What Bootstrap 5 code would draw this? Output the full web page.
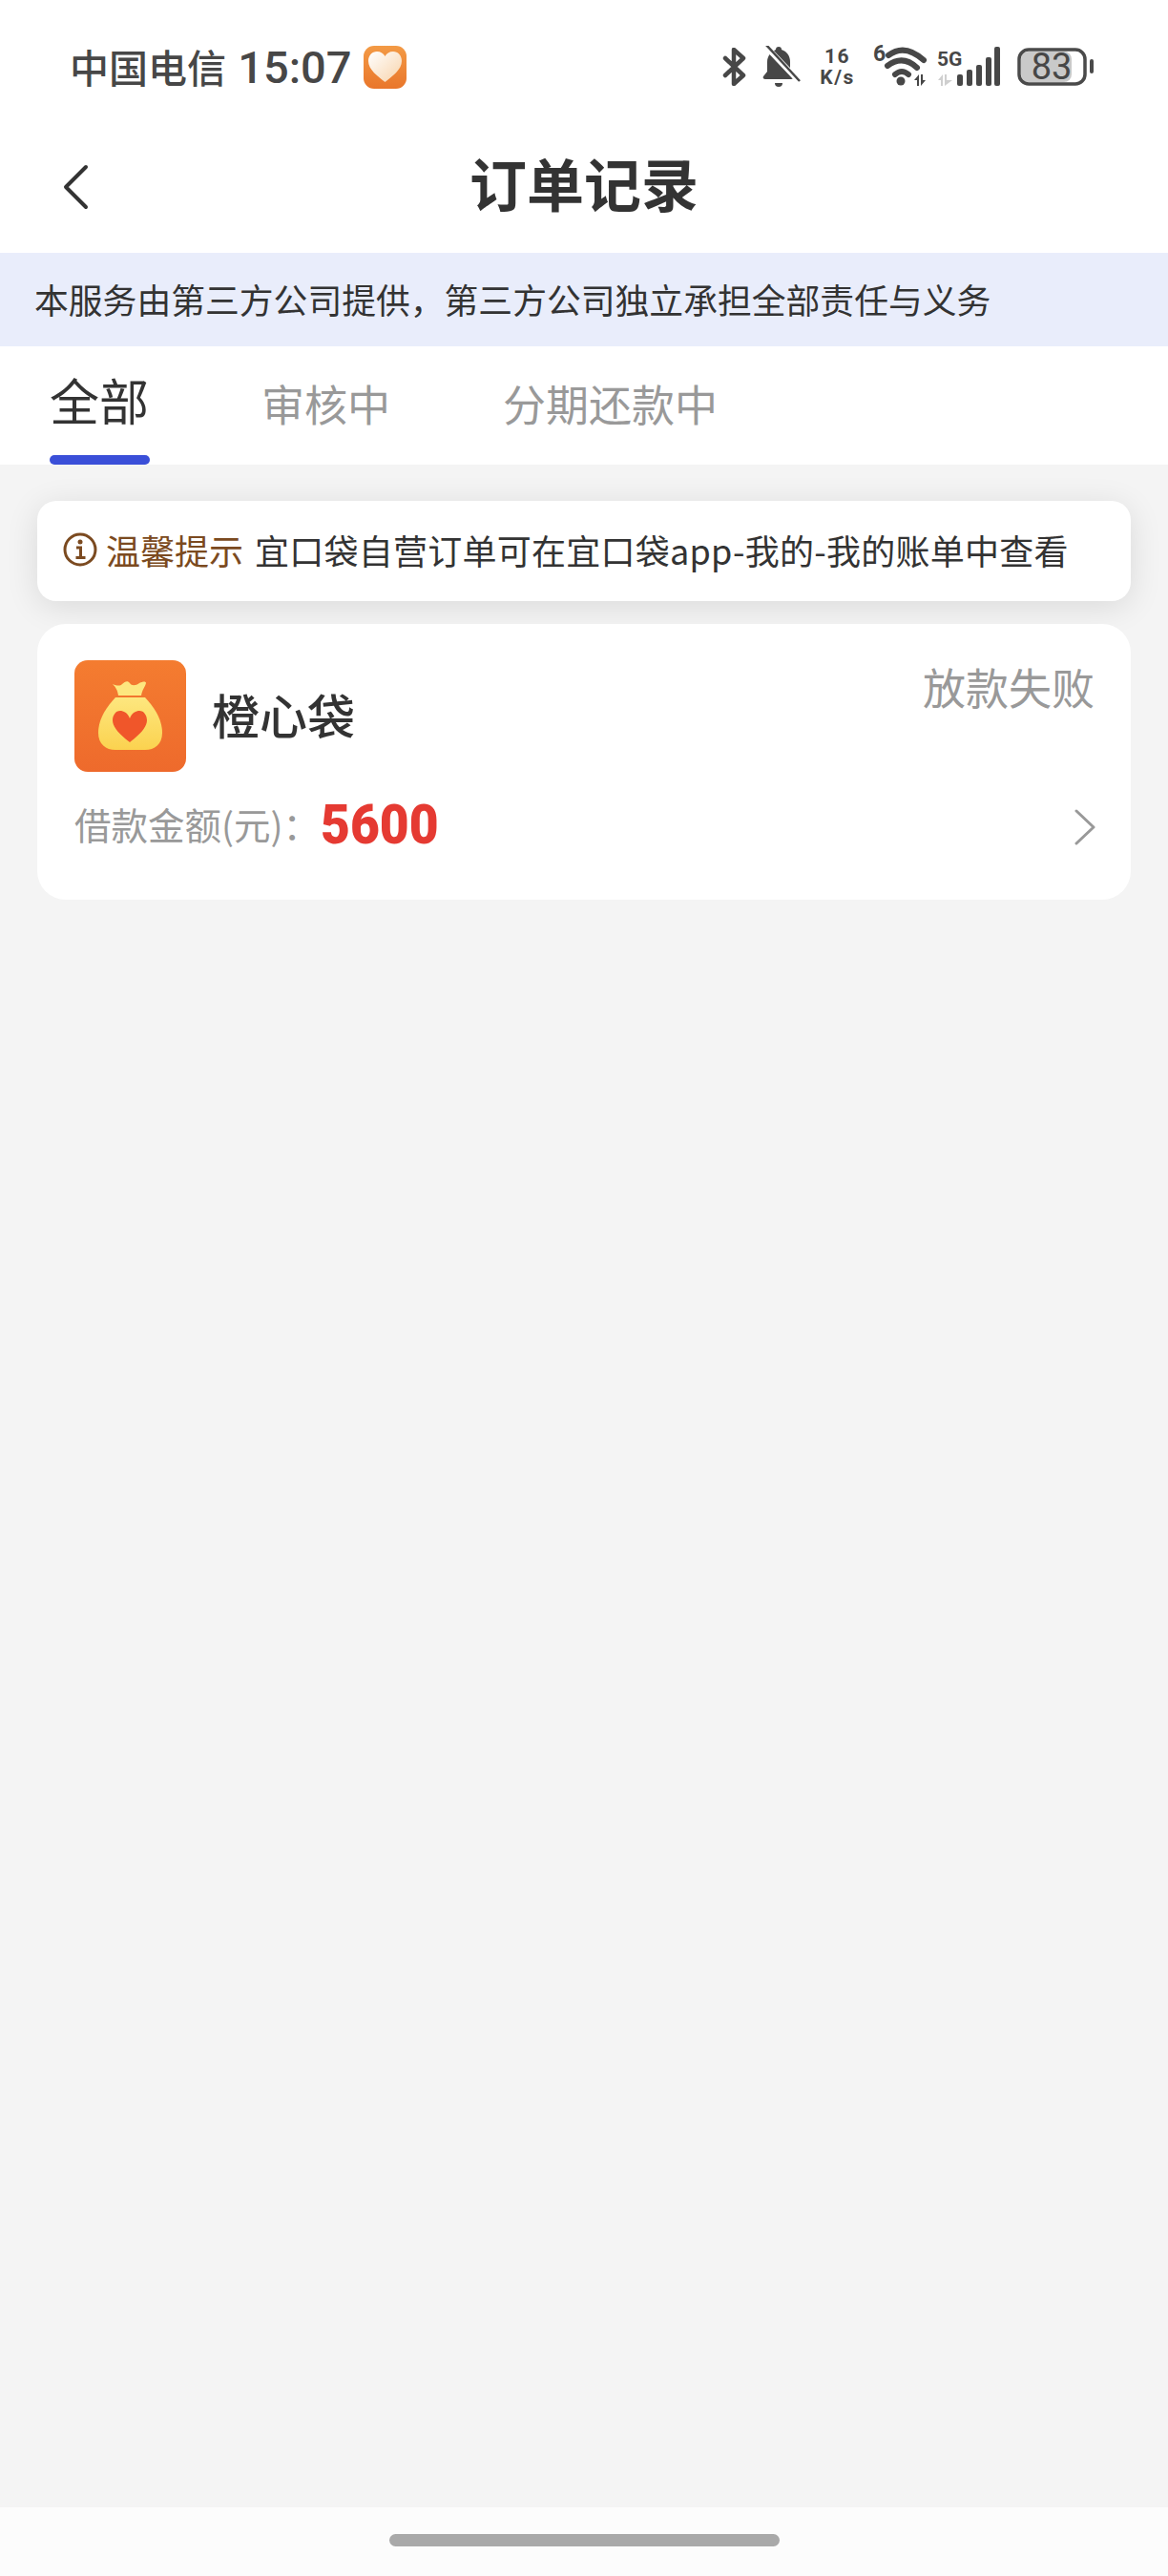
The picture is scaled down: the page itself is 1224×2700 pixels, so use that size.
<!DOCTYPE html>
<html lang="zh-CN">
<head>
<meta charset="UTF-8">
<meta name="viewport" content="width=device-width, initial-scale=1.0">
<title>订单记录</title>
<link href="https://cdn.jsdelivr.net/npm/bootstrap@5.3.3/dist/css/bootstrap.min.css" rel="stylesheet">
<style>
  body { font-family: "Noto Sans CJK SC", "Noto Sans", sans-serif; background: #f4f4f4; color: #333; width: 1224px; min-height: 2700px; }
  .status-row { height: 128px; padding: 12px 78px 0 73px; color: #474747; }
  .carrier { font-family: "Roboto", "Noto Sans CJK SC", sans-serif; font-size: 41px; font-weight: 500; line-height: 1; }
  .clock { font-size: 47px; margin-left: 2px; }
  .app-dot { margin-left: 13px; }
  .net-speed { width: 41px; font-family: "Roboto", sans-serif; font-weight: 700; text-align: center; }
  .net-speed span { display: block; font-size: 21px; line-height: 22px; letter-spacing: 1.5px; white-space: nowrap; }
  .top-nav { height: 137px; }
  .back-btn { left: 65px; top: 44px; }
  .page-title { font-size: 60px; font-weight: 700; line-height: 1; margin-top: -12px; }
  .service-note { height: 98px; background: #e9edfb; padding-left: 36px; font-size: 35.8px; color: #333; }
  .tab-row { height: 124px; padding-left: 52px; gap: 118px; }
  .tab-item { font-size: 45px; line-height: 1; color: #999; padding-top: 37px; }
  .tab-on { font-size: 52px; color: #333; padding-top: 30px; }
  .tab-on::after { content: ""; position: absolute; left: 0; right: -1px; bottom: 0; height: 10px; border-radius: 5px; background: #3a4fd8; }
  .tips-box { height: 105px; margin: 38px 39px 24px; padding: 0 0 4px 27px; border-radius: 20px; box-shadow: 0 6px 34px rgba(0, 0, 0, .11); font-size: 36px; color: #333; }
  .tips-label { color: #7b4a20; margin-left: 9px; margin-right: 12px; }
  .tips-text { letter-spacing: .25px; }
  .order-box { height: 289px; margin: 0 39px; padding: 38px 39px 0; border-radius: 30px; }
  .order-name { font-size: 50px; font-weight: 500; margin-left: 27px; margin-top: -5px; line-height: 1; color: #333; }
  .order-state { font-size: 45px; line-height: 1; color: #999; margin-top: 5px; margin-right: -1px; }
  .amount-row { margin-top: 31px; }
  .amount-label { font-size: 38.5px; color: #999; line-height: 1; margin-top: -6px; }
  .amount-value { font-family: "Roboto", sans-serif; font-size: 58px; font-weight: 900; line-height: 1; color: #e53a32; margin-left: 1px; margin-top: -5px; transform: scaleX(.92); transform-origin: left center; }
  .more-arrow { margin-right: -2px; }
  .home-row { height: 72px; background: #fcfcfc; }
  .home-bar { width: 409px; height: 13px; border-radius: 7px; background: #a9a9a9; margin-top: -3px; }
  .page-fill { flex: 1 1 auto; }
</style>
</head>
<body class="d-flex flex-column">
  <div class="bg-white">
    <div class="status-row d-flex align-items-center">
      <span class="carrier">中国电信 <span class="clock">15:07</span></span>
      <svg class="app-dot" width="45" height="45" viewBox="0 0 45 45">
        <defs>
          <linearGradient id="dotbg" x1="0" y1="0" x2="0" y2="1"><stop offset="0" stop-color="#f39a45"/><stop offset="1" stop-color="#e9762b"/></linearGradient>
          <linearGradient id="dotheart" x1="0" y1="0" x2="1" y2="1"><stop offset="0" stop-color="#fff"/><stop offset="1" stop-color="#f8d3aa"/></linearGradient>
        </defs>
        <rect width="45" height="45" rx="11" fill="url(#dotbg)"/>
        <path d="M22.5 38C15 32 5 25 5 16 5 10 9 6 14 6c4 0 7 2 8.500 5C24 8 27 6 31 6c5 0 9 4 9 10 0 9-10 16-17.500 22z" fill="url(#dotheart)"/>
      </svg>
      <div class="d-flex align-items-center gap-3 ms-auto">
        <svg width="26" height="40" viewBox="0 0 26 40" fill="none" stroke="#474747" stroke-width="4.500" stroke-linejoin="round" stroke-linecap="round">
          <path d="M3 11 22 29 12 38V2l10 9L3 29"/>
        </svg>
        <svg width="42" height="45" viewBox="0 0 42 45">
          <path d="M17 1a3 3 0 0 1 3 3c6 2 9 7 9 13v10l3 5c1 1 0 3-2 3H3c-2 0-3-2-2-3l4-5V17c0-6 4-11 9-13a3 3 0 0 1 3-3z" fill="#474747"/>
          <path d="M13 39h8a4 4 0 0 1-8 0z" fill="#474747"/>
          <path d="M3 0 39 38" stroke="#fff" stroke-width="6"/>
          <path d="M1 1 37 40" stroke="#474747" stroke-width="2.500" transform="translate(2 -3)"/>
        </svg>
        <div class="net-speed"><span>16</span><span>K/s</span></div>
        <svg width="136" height="58" viewBox="0 -6 136 58" fill="#474747">
          <text x="1" y="17" font-family="Roboto, sans-serif" font-size="23" font-weight="700">6</text>
          <g fill="none" stroke="#474747" stroke-width="6" stroke-linecap="round">
            <path d="M17 11Q34-2 54 16"/>
            <path d="M16 22Q32 10 47 24"/>
            <path d="M24 31Q31 25 38 31"/>
          </g>
          <circle cx="30" cy="38" r="4.500"/>
          <path d="M44 37l5-6v12h-2v-6zM51 31h2v6h3l-5 6z"/>
          <text x="68" y="22" font-family="Roboto, sans-serif" font-size="21" font-weight="700">5G</text>
          <path d="M69 37l5-6v12h-2v-6zM76 31h2v6h6l-8 6z" fill="#cfcfcf"/>
          <rect x="89" y="31" width="6" height="12" rx="2"/>
          <rect x="99" y="26" width="6" height="17" rx="2"/>
          <rect x="109" y="21" width="6" height="22" rx="2"/>
          <rect x="119" y="13" width="6" height="30" rx="2"/>
          <rect x="128" y="2" width="6" height="41" rx="2"/>
        </svg>
        <svg width="80" height="50" viewBox="0 -5 80 50">
          <rect x="4" y="4" width="53" height="32" rx="8" fill="#c9c9c9"/>
          <rect x="2" y="2" width="69" height="36" rx="10" fill="none" stroke="#4a4a4a" stroke-width="3.500"/>
          <rect x="76" y="12" width="4" height="15" rx="2" fill="#4a4a4a"/>
          <text x="36" y="33" text-anchor="middle" font-family="Roboto, sans-serif" font-size="38" fill="#474747">83</text>
        </svg>
      </div>
    </div>
    <div class="top-nav position-relative d-flex align-items-center justify-content-center">
      <svg class="back-btn position-absolute" width="30" height="48" viewBox="0 0 30 48" fill="none" stroke="#333" stroke-width="4" stroke-linecap="round" stroke-linejoin="round">
        <path d="M25 3 4 24l21 21"/>
      </svg>
      <h1 class="page-title mb-0">订单记录</h1>
    </div>
  </div>

  <div class="service-note d-flex align-items-center">本服务由第三方公司提供，第三方公司独立承担全部责任与义务</div>

  <div class="tab-row bg-white d-flex">
    <div class="tab-item tab-on position-relative">全部</div>
    <div class="tab-item">审核中</div>
    <div class="tab-item">分期还款中</div>
  </div>

  <div class="tips-box card border-0 flex-row align-items-center">
    <svg width="36" height="36" viewBox="0 0 36 36" fill="none" stroke="#7b4a20">
      <circle cx="18" cy="18" r="16" stroke-width="3"/>
      <circle cx="18" cy="10" r="2.500" fill="#7b4a20" stroke="none"/>
      <path d="M14 16h4.500v10M13.500 26.500h10" stroke-width="3"/>
    </svg>
    <span class="tips-label">温馨提示</span>
    <span class="tips-text">宜口袋自营订单可在宜口袋app-我的-我的账单中查看</span>
  </div>

  <div class="order-box card border-0">
    <div class="d-flex justify-content-between">
      <div class="d-flex align-items-center">
        <svg width="117" height="117" viewBox="0 0 117 117">
          <defs>
            <linearGradient id="logobg" x1="0" y1="0" x2="0" y2="1"><stop offset="0" stop-color="#f47c30"/><stop offset="1" stop-color="#ee6a2c"/></linearGradient>
            <linearGradient id="bagfill" x1="0" y1="0" x2="0" y2="1"><stop offset="0" stop-color="#fde77f"/><stop offset="1" stop-color="#fbd24f"/></linearGradient>
          </defs>
          <rect width="117" height="117" rx="14" fill="url(#logobg)"/>
          <path d="M40 25C45 27 48 27 50 25 53 22 56 21 58 24 60 27 64 27 68 24 72 22 75 22 75 24 74 28 71 31 70 37H46C45 31 43 28 40 25Z" fill="#fde77f"/>
          <path d="M43 39H74C84 50 92 62 92 76 92 88 84 94 74 94H43C33 94 25 88 25 76 25 62 33 50 43 39Z" fill="url(#bagfill)"/>
          <path d="M58 61C60 55 65 53 68 53 73 53 76 58 76 63 76 71 66 80 58 86 50 80 40 71 40 63 40 58 43 53 48 53 51 53 56 55 58 61Z" fill="#f0562a"/>
        </svg>
        <span class="order-name">橙心袋</span>
      </div>
      <span class="order-state">放款失败</span>
    </div>
    <div class="amount-row d-flex align-items-center">
      <span class="amount-label">借款金额(元)：</span>
      <span class="amount-value">5600</span>
      <svg class="more-arrow ms-auto" width="22" height="38" viewBox="0 0 22 38" fill="none" stroke="#999" stroke-width="3" stroke-linecap="round" stroke-linejoin="round">
        <path d="M2 2 20 19 2 36"/>
      </svg>
    </div>
  </div>

  <div class="page-fill"></div>

  <div class="home-row d-flex align-items-center justify-content-center">
    <div class="home-bar"></div>
  </div>
<script src="https://cdn.jsdelivr.net/npm/bootstrap@5.3.3/dist/js/bootstrap.bundle.min.js"></script>
</body>
</html>
